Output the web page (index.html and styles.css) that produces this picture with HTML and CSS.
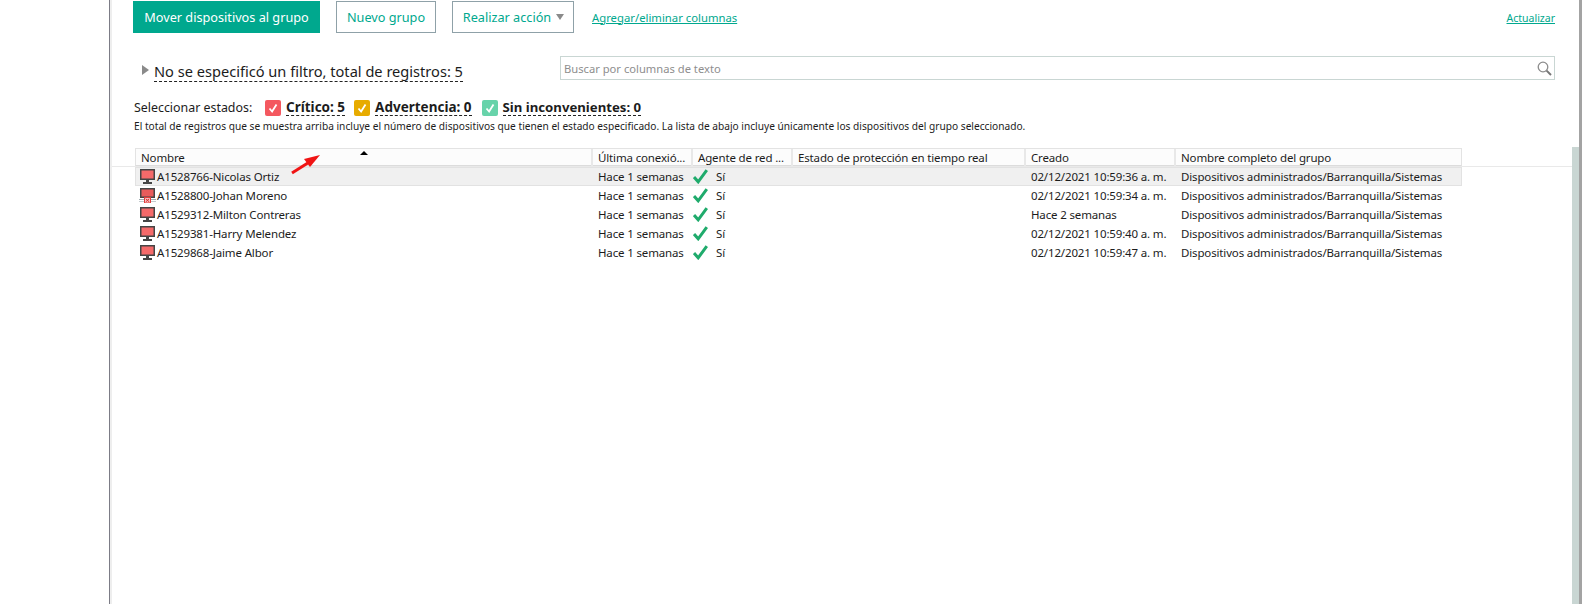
FILE: index.html
```html
<!DOCTYPE html>
<html lang="es">
<head>
<meta charset="utf-8">
<title>Dispositivos</title>
<link rel="stylesheet" href="styles.css">
</head>
<body>
<svg width="0" height="0" class="defs">
  <defs>
    <symbol id="pc" viewBox="0 0 15 15">
      <rect x="0" y="0" width="15" height="11" fill="#454545"/>
      <rect x="1.5" y="1.5" width="12" height="8" fill="#f46a6a"/>
      <rect x="6" y="11" width="3" height="2" fill="#454545"/>
      <rect x="3" y="13" width="9" height="2" fill="#454545"/>
    </symbol>
    <symbol id="pcx" viewBox="0 0 17 15">
      <rect x="1" y="0" width="15" height="10" fill="#454545"/>
      <rect x="2.5" y="1.5" width="12" height="7" fill="#e85c5c"/>
      <rect x="0" y="11" width="17" height="1" fill="#9fabb0"/>
      <rect x="0" y="13" width="17" height="1" fill="#c3cbce"/>
      <rect x="5.5" y="9.5" width="6" height="5.5" fill="#f7c0c0" stroke="#e23c3c"/>
      <path d="M6.8 10.8l3.4 3M10.2 10.8l-3.4 3" stroke="#d92c2c" stroke-width="1"/>
    </symbol>
    <symbol id="ok" viewBox="0 0 15 15">
      <path d="M1 8l4.2 4.8L13.8 1.2" fill="none" stroke="#1fab6c" stroke-width="3"/>
    </symbol>
    <symbol id="tick" viewBox="0 0 16 16">
      <path d="M4.5 8.5l2.6 3 4.4-7" fill="none" stroke="#fff" stroke-width="1.8"/>
    </symbol>
  </defs>
</svg>
<div class="app">
  <aside class="side"></aside>
  <main class="main">
    <div class="top">
      <div class="toolbar">
        <button class="btn btn-primary">Mover dispositivos al grupo</button>
        <button class="btn btn-new">Nuevo grupo</button>
        <button class="btn btn-action">Realizar acción<span class="caret"></span></button>
        <a class="link link-cols">Agregar/eliminar columnas</a>
        <a class="link link-refresh">Actualizar</a>
      </div>
      <div class="filter-row">
        <span class="expander"></span>
        <span class="filter-title">No se especificó un filtro, total de registros: 5</span>
        <div class="search">
          <span class="search-text">Buscar por columnas de texto</span>
          <svg class="search-icon" width="15" height="15" viewBox="0 0 15 15"><circle cx="6" cy="6" r="4.8" fill="none" stroke="#8c8c8c" stroke-width="1.3"/><path d="M9.6 9.6l4.4 4.4" stroke="#777" stroke-width="2"/></svg>
        </div>
      </div>
      <div class="states">
        <span class="states-label">Seleccionar estados:</span>
        <span class="state state-crit"><span class="box box-red"><svg width="16" height="16"><use href="#tick"/></svg></span><span class="state-text">Crítico: 5</span></span>
        <span class="state state-warn"><span class="box box-amber"><svg width="16" height="16"><use href="#tick"/></svg></span><span class="state-text">Advertencia: 0</span></span>
        <span class="state state-good"><span class="box box-green"><svg width="16" height="16"><use href="#tick"/></svg></span><span class="state-text">Sin inconvenientes: 0</span></span>
      </div>
      <p class="note">El total de registros que se muestra arriba incluye el número de dispositivos que tienen el estado especificado. La lista de abajo incluye únicamente los dispositivos del grupo seleccionado.</p>
    </div>
    <div class="table-area">
      <div class="table">
        <div class="head-wrap">
          <div class="grid head">
            <div class="cell cell-name">Nombre<span class="sort"></span></div>
            <div class="cell">Última conexió...</div>
            <div class="cell">Agente de red ...</div>
            <div class="cell">Estado de protección en tiempo real</div>
            <div class="cell">Creado</div>
            <div class="cell">Nombre completo del grupo</div>
          </div>
        </div>
        <div class="grid row selected">
          <div class="col-name"><svg class="pc" width="15" height="15"><use href="#pc"/></svg>A1528766-Nicolas Ortiz</div>
          <div class="col">Hace 1 semanas</div>
          <div class="col col-agent"><svg width="15" height="15"><use href="#ok"/></svg><span>Sí</span></div>
          <div class="col"></div>
          <div class="col">02/12/2021 10:59:36 a. m.</div>
          <div class="col">Dispositivos administrados/Barranquilla/Sistemas</div>
        </div>
        <div class="grid row">
          <div class="col-name"><svg class="pc pc-x" width="17" height="15"><use href="#pcx"/></svg>A1528800-Johan Moreno</div>
          <div class="col">Hace 1 semanas</div>
          <div class="col col-agent"><svg width="15" height="15"><use href="#ok"/></svg><span>Sí</span></div>
          <div class="col"></div>
          <div class="col">02/12/2021 10:59:34 a. m.</div>
          <div class="col">Dispositivos administrados/Barranquilla/Sistemas</div>
        </div>
        <div class="grid row">
          <div class="col-name"><svg class="pc" width="15" height="15"><use href="#pc"/></svg>A1529312-Milton Contreras</div>
          <div class="col">Hace 1 semanas</div>
          <div class="col col-agent"><svg width="15" height="15"><use href="#ok"/></svg><span>Sí</span></div>
          <div class="col"></div>
          <div class="col">Hace 2 semanas</div>
          <div class="col">Dispositivos administrados/Barranquilla/Sistemas</div>
        </div>
        <div class="grid row">
          <div class="col-name"><svg class="pc" width="15" height="15"><use href="#pc"/></svg>A1529381-Harry Melendez</div>
          <div class="col">Hace 1 semanas</div>
          <div class="col col-agent"><svg width="15" height="15"><use href="#ok"/></svg><span>Sí</span></div>
          <div class="col"></div>
          <div class="col">02/12/2021 10:59:40 a. m.</div>
          <div class="col">Dispositivos administrados/Barranquilla/Sistemas</div>
        </div>
        <div class="grid row">
          <div class="col-name"><svg class="pc" width="15" height="15"><use href="#pc"/></svg>A1529868-Jaime Albor</div>
          <div class="col">Hace 1 semanas</div>
          <div class="col col-agent"><svg width="15" height="15"><use href="#ok"/></svg><span>Sí</span></div>
          <div class="col"></div>
          <div class="col">02/12/2021 10:59:47 a. m.</div>
          <div class="col">Dispositivos administrados/Barranquilla/Sistemas</div>
        </div>
      </div>
      <div class="scrollbar"></div>
    </div>
    <svg class="annotation" width="34" height="24" viewBox="0 0 34 24"><path d="M3 21L22 9" stroke="#f01414" stroke-width="3"/><path d="M31 3L15 7l6 8z" fill="#f01414"/></svg>
  </main>
  <div class="rail"></div>
</div>
</body>
</html>
```

FILE: styles.css
```css
* { box-sizing: border-box; }
html, body { margin: 0; height: 604px; overflow: hidden; background: #fff; }
body { font-family: "Noto Sans", "Liberation Sans", sans-serif; font-size: 11.5px; letter-spacing: -0.15px; color: #1c1c1c; }
.defs { position: absolute; }
.app { display: flex; height: 604px; }
.side { width: 110px; border-right: 1px solid #7c7c86; }
.main { flex: 1; display: flex; flex-direction: column; border-left: 2px solid #eeeeee; position: relative; min-width: 0; }
.rail { width: 3px; background: #a3a3a3; }

.top { height: 147px; padding-left: 21px; padding-right: 24px; }
.toolbar { display: flex; align-items: center; height: 32px; margin-top: 1px; }
.btn { height: 32px; font: 12.7px "Noto Sans", sans-serif; background: #fff; border: 1px solid #8fa1a8; color: #00a88e; padding: 0; }
.btn-primary { width: 187px; background: #00a88e; border-color: #00a88e; color: #fff; }
.btn-new { width: 100px; margin-left: 16px; }
.btn-action { width: 122px; margin-left: 16px; padding-left: 1px; }
.caret { display: inline-block; border: 4px solid transparent; border-top: 6px solid #8a8a8a; border-bottom: 0; margin-left: 5px; vertical-align: 2px; }
.link { color: #00a88e; font-size: 11.3px; letter-spacing: 0; text-decoration: underline; }
.link-cols { margin-left: 18px; }
.link-refresh { margin-left: auto; font-size: 10.5px; padding-top: 1px; }

.filter-row { display: flex; align-items: center; height: 24px; margin-top: 23px; }
.expander { border: 5px solid transparent; border-left: 7px solid #8a8a8a; border-right: 0; margin-left: 9px; margin-right: 5px; margin-top: 4px; }
.filter-title { font-size: 14.6px; letter-spacing: 0; line-height: 19px; border-bottom: 1px dashed #222; margin-top: 8px; }
.search { margin-left: auto; width: 995px; height: 24px; border: 1px solid #c9d6d3; display: flex; align-items: center; justify-content: space-between; padding: 0 2px 0 3px; }
.search-text { color: #8e8e8e; font-size: 11.2px; letter-spacing: 0; }

.states { display: flex; align-items: center; height: 16px; margin-top: 19px; padding-top: 1px; }
.states-label { width: 132px; padding-left: 1px; font-size: 12.4px; letter-spacing: 0; }
.state { display: flex; align-items: center; margin-right: 9px; }
.state-warn { margin-right: 10px; }
.state-good .state-text { font-size: 13.2px; }
.box { width: 16px; height: 16px; border-radius: 2px; margin-right: 5px; display: flex; }
.box-red { background: #f4585f; }
.box-amber { background: #e7ab00; }
.box-green { background: #67d3aa; }
.state-text { font-weight: 700; font-size: 13.5px; letter-spacing: 0; line-height: 15px; border-bottom: 1px dashed #222; }
.note { margin: 4px 0 0 1px; font-size: 10.17px; letter-spacing: 0; line-height: 14px; }

.table-area { flex: 1; display: flex; min-height: 0; }
.table { flex: 1; padding-top: 1px; }
.scrollbar { width: 7px; background: #c9d6d3; }
.head-wrap { border-bottom: 1px solid #e9e9e9; height: 19px; padding-left: 23px; }
.grid { display: grid; grid-template-columns: 457px 100px 100px 233px 150px 287px; width: 1327px; white-space: nowrap; }
.head { height: 18px; border: 1px solid #e3e3e3; border-bottom-color: #dcdcdc; background: #fcfcfc; }
.cell { padding-left: 5px; line-height: 17px; border-right: 2px solid #e8e8e8; position: relative; }
.cell:last-child { border-right: 0; }
.sort { position: absolute; left: 224px; top: 2px; border: 4px solid transparent; border-bottom: 4px solid #000; border-top: 0; }
.row { height: 19px; margin-left: 23px; line-height: 19px; }
.selected { background: #f0f0f0; box-shadow: inset 0 0 0 1px #e2e2e2; }
.col-name { display: flex; align-items: center; padding-left: 5px; }
.pc { margin-right: 2px; flex: none; }
.pc-x { margin-left: -1px; margin-right: 1px; }
.col { padding-left: 6px; overflow: hidden; }
.col-agent { display: flex; align-items: center; padding-left: 1px; }
.col-agent span { margin-left: 8px; }
.annotation { position: absolute; left: 177px; top: 152px; }
```
